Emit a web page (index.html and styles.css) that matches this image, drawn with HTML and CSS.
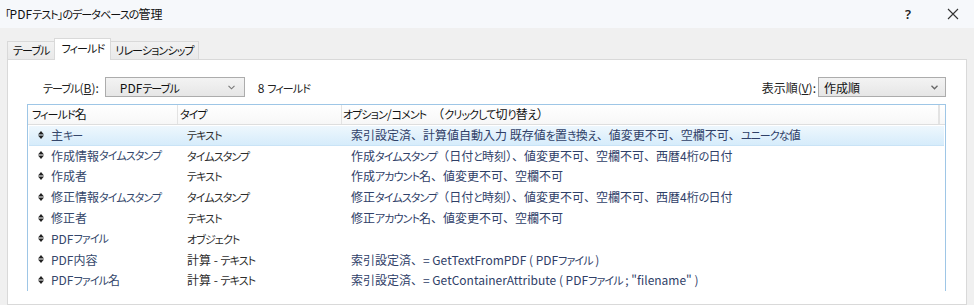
FILE: index.html
```html
<!DOCTYPE html>
<html lang="ja">
<head>
<meta charset="utf-8">
<title>データベースの管理</title>
<link rel="stylesheet" href="styles.css">
</head>
<body>
<div class="window">
  <div class="titlebar">
    <span class="title"><span class="k">「</span>PDF<span class="k">テスト」のデータベースの</span>管理</span>
    <span class="help">?</span>
    <svg class="close" width="12" height="12" viewBox="0 0 12 12"><path d="M1 1L11 11M11 1L1 11" stroke="#333" stroke-width="1.1" fill="none"/></svg>
  </div>
  <div class="body">
    <div class="tabs">
      <div class="tab"><span class="k">テーブル</span></div>
      <div class="tab active"><span class="k">フィールド</span></div>
      <div class="tab"><span class="k">リレーションシップ</span></div>
    </div>
    <div class="panel">
      <div class="toolbar">
        <div class="left">
          <span class="label"><span class="k">テーブル</span>(<u>B</u>):</span>
          <div class="combo combo-table"><span>PDF<span class="k">テーブル</span></span><svg class="chev" width="7" height="5" viewBox="0 0 7 5"><path d="M0.5 0.8L3.5 3.8L6.5 0.8" stroke="#777" stroke-width="1.1" fill="none"/></svg></div>
          <span class="count">8 <span class="k">フィールド</span></span>
        </div>
        <div class="right">
          <span class="label">表示順(<u>V</u>):</span>
          <div class="combo combo-order"><span>作成順</span><svg class="chev" width="7" height="5" viewBox="0 0 7 5"><path d="M0.5 0.8L3.5 3.8L6.5 0.8" stroke="#666" stroke-width="1.3" fill="none"/></svg></div>
        </div>
      </div>
      <div class="list">
        <div class="head">
          <div class="h h-name"><span class="k">フィールド</span>名</div>
          <div class="h h-type"><span class="k">タイプ</span></div>
          <div class="h h-opt"><span class="k">オプション</span>/<span class="k">コメント</span>　（<span class="k">クリックして</span>切<span class="k">り</span>替<span class="k">え</span>）</div>
          <div class="h h-end"></div>
        </div>
        <div class="row sel">
          <div class="c-name"><svg class="grip" width="6" height="8" viewBox="0 0 6 8"><path d="M3 0L6 3.5H0Z M0 4.5H6L3 8Z" fill="#222"/></svg>主<span class="k">キー</span></div>
          <div class="c-type"><span class="k">テキスト</span></div>
          <div class="c-opt">索引設定済、計算値自動入力 既存値<span class="k">を</span>置<span class="k">き</span>換<span class="k">え</span>、値変更不可、空欄不可、<span class="k">ユニークな</span>値</div>
        </div>
        <div class="row">
          <div class="c-name"><svg class="grip" width="6" height="8" viewBox="0 0 6 8"><path d="M3 0L6 3.5H0Z M0 4.5H6L3 8Z" fill="#222"/></svg>作成情報<span class="k">タイムスタンプ</span></div>
          <div class="c-type"><span class="k">タイムスタンプ</span></div>
          <div class="c-opt">作成<span class="k">タイムスタンプ</span>（日付<span class="k">と</span>時刻）、値変更不可、空欄不可、西暦4桁<span class="k">の</span>日付</div>
        </div>
        <div class="row">
          <div class="c-name"><svg class="grip" width="6" height="8" viewBox="0 0 6 8"><path d="M3 0L6 3.5H0Z M0 4.5H6L3 8Z" fill="#222"/></svg>作成者</div>
          <div class="c-type"><span class="k">テキスト</span></div>
          <div class="c-opt">作成<span class="k">アカウント</span>名、値変更不可、空欄不可</div>
        </div>
        <div class="row">
          <div class="c-name"><svg class="grip" width="6" height="8" viewBox="0 0 6 8"><path d="M3 0L6 3.5H0Z M0 4.5H6L3 8Z" fill="#222"/></svg>修正情報<span class="k">タイムスタンプ</span></div>
          <div class="c-type"><span class="k">タイムスタンプ</span></div>
          <div class="c-opt">修正<span class="k">タイムスタンプ</span>（日付<span class="k">と</span>時刻）、値変更不可、空欄不可、西暦4桁<span class="k">の</span>日付</div>
        </div>
        <div class="row">
          <div class="c-name"><svg class="grip" width="6" height="8" viewBox="0 0 6 8"><path d="M3 0L6 3.5H0Z M0 4.5H6L3 8Z" fill="#222"/></svg>修正者</div>
          <div class="c-type"><span class="k">テキスト</span></div>
          <div class="c-opt">修正<span class="k">アカウント</span>名、値変更不可、空欄不可</div>
        </div>
        <div class="row">
          <div class="c-name"><svg class="grip" width="6" height="8" viewBox="0 0 6 8"><path d="M3 0L6 3.5H0Z M0 4.5H6L3 8Z" fill="#222"/></svg>PDF<span class="k">ファイル</span></div>
          <div class="c-type"><span class="k">オブジェクト</span></div>
          <div class="c-opt"></div>
        </div>
        <div class="row">
          <div class="c-name"><svg class="grip" width="6" height="8" viewBox="0 0 6 8"><path d="M3 0L6 3.5H0Z M0 4.5H6L3 8Z" fill="#222"/></svg>PDF内容</div>
          <div class="c-type">計算 - <span class="k">テキスト</span></div>
          <div class="c-opt">索引設定済、= GetTextFromPDF ( PDF<span class="k">ファイル</span> )</div>
        </div>
        <div class="row">
          <div class="c-name"><svg class="grip" width="6" height="8" viewBox="0 0 6 8"><path d="M3 0L6 3.5H0Z M0 4.5H6L3 8Z" fill="#222"/></svg>PDF<span class="k">ファイル</span>名</div>
          <div class="c-type">計算 - <span class="k">テキスト</span></div>
          <div class="c-opt">索引設定済、= GetContainerAttribute ( PDF<span class="k">ファイル</span> ; "filename" )</div>
        </div>
      </div>
    </div>
  </div>
</div>
</body>
</html>
```
FILE: styles.css
```css
* { box-sizing: border-box; }
html, body {
  margin: 0;
  padding: 0;
  width: 974px;
  height: 305px;
  overflow: hidden;
}
body {
  font-family: "Noto Sans CJK JP", "Noto Sans", sans-serif;
  font-size: 12px;
  color: #000;
  background: #f0f0f0;
}
.k {
  font-size: 11px;
  font-feature-settings: "palt";
  letter-spacing: -0.9px;
}
.window {
  display: flex;
  flex-direction: column;
  height: 305px;
}
.titlebar {
  height: 28px;
  flex: none;
  background: #f6f8fb;
  display: flex;
  align-items: center;
  padding-left: 5px;
  padding-bottom: 1px;
}
.title {
  flex: 1;
  color: #111;
}
.help {
  font-family: "Noto Sans", sans-serif;
  font-size: 13px;
  font-weight: 600;
  color: #222;
  margin-right: 36px;
}
.close {
  margin-right: 15px;
}
.body {
  flex: 1;
  display: flex;
  flex-direction: column;
  padding-top: 11px;
  padding-left: 7px;
  padding-right: 7px;
}
.tabs {
  display: flex;
  align-items: flex-end;
  height: 21px;
  margin-bottom: -1px;
  position: relative;
  z-index: 1;
}
.tab {
  height: 18px;
  padding: 0 4px 0 5px;
  border: 1px solid #d9d9d9;
  border-bottom: none;
  background: linear-gradient(#f2f2f2, #e9e9e9);
  line-height: 16px;
  color: #111;
  margin-bottom: 1px;
}
.tab + .tab { margin-left: -1px; }
.tab.active {
  height: 22px;
  background: #fff;
  margin-bottom: 0;
  line-height: 18px;
  padding: 0 6px 0 7px;
  margin-left: -1px;
  margin-right: -1px;
  position: relative;
  z-index: 2;
}
.panel {
  flex: 1;
  background: #fff;
  border: 1px solid #d9d9d9;
  padding: 17px 20px 0 19px;
}
.toolbar {
  display: flex;
  justify-content: space-between;
  align-items: center;
  height: 20px;
  margin-bottom: 7px;
}
.left, .right {
  display: flex;
  align-items: center;
}
.label { color: #222; }
.left .label { margin-left: 16px; margin-right: 6px; }
.right .label { margin-right: 2px; }
.combo {
  height: 20px;
  border: 1px solid #acacac;
  background: linear-gradient(#f3f3f3, #e6e6e6);
  display: flex;
  align-items: center;
  justify-content: space-between;
  color: #111;
}
.combo-table {
  width: 140px;
  padding: 0 9px 0 14px;
}
.combo-order {
  width: 128px;
  padding: 0 7px 0 5px;
}
.count {
  margin-left: 13px;
  color: #222;
}
.list {
  flex: 1;
  border: 1px solid #9ec6e6;
  border-bottom: none;
  background: #fff;
}
.head {
  display: grid;
  grid-template-columns: 150px 164px 1fr 6px;
  height: 20px;
  background: linear-gradient(#ffffff, #f7f7f7);
  border-bottom: 1px solid #dedede;
}
.h {
  line-height: 18px;
  color: #111;
  border-right: 1px solid #e3e3e3;
  padding-left: 2px;
  white-space: nowrap;
}
.h-name { padding-left: 4px; }
.h-opt { padding-left: 1px; }
.h-end { border-right: none; border-left: 1px solid #e3e3e3; }
.row {
  display: grid;
  grid-template-columns: 150px 164px 1fr;
  height: 20.8px;
  align-items: center;
  margin: 0 1px;
  padding-bottom: 2px;
  white-space: nowrap;
}
.row.sel {
  background: linear-gradient(#eef7fd, #d6ecfb);
  border-bottom: 1px solid #c9e3f6;
  margin-top: 1px;
  height: 19.8px;
  padding-bottom: 1px;
}
.c-name {
  display: flex;
  align-items: center;
  padding-left: 9px;
  color: #34476b;
}
.grip {
  margin-right: 7px;
  flex: none;
}
.c-type {
  padding-left: 8px;
  color: #2d2d2d;
}
.c-opt {
  padding-left: 8px;
  color: #2f4068;
}
```
